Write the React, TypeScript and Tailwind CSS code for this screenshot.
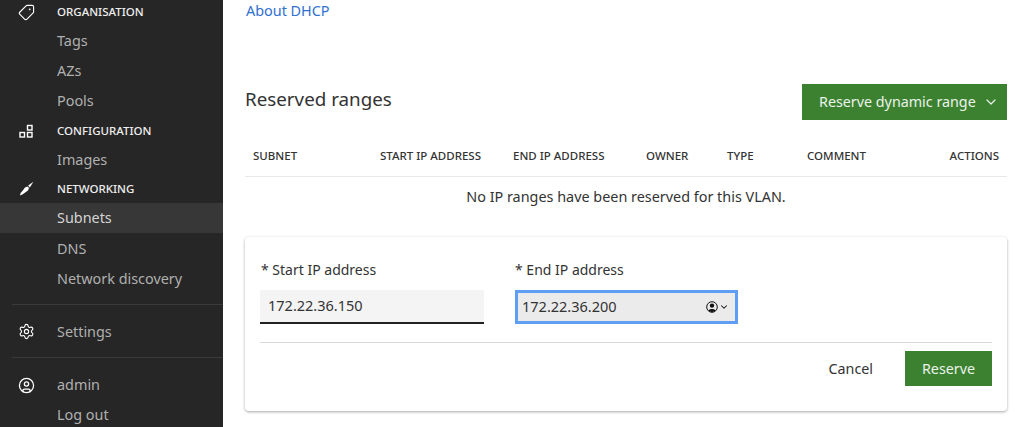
import type { ReactNode } from "react";
import { ChevronDown, Settings, CircleUser, Tag } from "lucide-react";

const Heading = ({ icon, label, h }: { icon: ReactNode; label: string; h: string }) => (
  <div className={`flex items-center shrink-0 ${h}`}>
    <div className="w-[57px] pl-[18px] flex items-center text-white">{icon}</div>
    <span className="text-[11.5px] font-medium text-[#eeeeee]">{label}</span>
  </div>
);

const Item = ({ label, h, active }: { label: string; h: string; active?: boolean }) => (
  <div className={`pl-[57px] shrink-0 flex items-center text-[14.4px] ${h} ${active ? "bg-[#373737] text-[#d4d4d4]" : "text-[#b0b0b0]"}`}>{label}</div>
);

const columns = [
  { label: "SUBNET", w: "w-[135px]", cls: "pl-2" },
  { label: "START IP ADDRESS", w: "w-[133px]", cls: "" },
  { label: "END IP ADDRESS", w: "w-[133px]", cls: "" },
  { label: "OWNER", w: "w-[81px]", cls: "" },
  { label: "TYPE", w: "w-[80px]", cls: "" },
  { label: "COMMENT", w: "w-[110px]", cls: "" },
  { label: "ACTIONS", w: "flex-1", cls: "text-right pr-2" },
];

export default function App() {
  return (
    <div className="flex h-[427px] w-[1024px] overflow-hidden bg-white text-[#333] font-['Noto_Sans',sans-serif]">
      <aside className="w-[223px] shrink-0 bg-[#262626] flex flex-col overflow-hidden">
        <Heading
          h="h-[28px] -mt-[2px]"
          label="ORGANISATION"
          icon={<Tag className="w-[17px] h-[17px] -scale-x-100" strokeWidth={1.6} />}
        />
        <Item label="Tags" h="h-[30px]" />
        <Item label="AZs" h="h-[30px]" />
        <Item label="Pools" h="h-[30px]" />
        <Heading
          h="h-[30px]"
          label="CONFIGURATION"
          icon={
            <svg width="17" height="17" viewBox="0 0 17 17" fill="none" stroke="currentColor" strokeWidth="1.4">
              <rect x="2" y="9.5" width="4.5" height="4.5" />
              <rect x="9.5" y="9.5" width="4.5" height="4.5" />
              <rect x="9.5" y="2.5" width="4.5" height="4.5" />
            </svg>
          }
        />
        <Item label="Images" h="h-[28px]" />
        <Heading
          h="h-[29px]"
          label="NETWORKING"
          icon={
            <svg width="17" height="17" viewBox="0 0 17 17" fill="currentColor">
              <path d="M2 15.5 L2.6 13 L5 10.2 L7 7.6 L9.6 6.4 L11 8 L10 10.4 L7.2 12.4 L4.4 14.6 Z" />
              <path d="M10.2 5.6 L15.4 1.8 L11.8 7.4 Z" />
            </svg>
          }
        />
        <Item label="Subnets" h="h-[30px]" active />
        <Item label="DNS" h="h-[31px]" />
        <Item label="Network discovery" h="h-[30px]" />
        <div className="h-[11px] shrink-0 border-b border-[#3a3a3a] ml-3" />
        <div className="h-[52px] pt-[1px] shrink-0 flex items-center text-[14.4px] text-[#b0b0b0]">
          <div className="w-[57px] pl-[18px] text-white">
            <Settings className="w-[17px] h-[17px]" strokeWidth={1.6} />
          </div>
          Settings
        </div>
        <div className="shrink-0 border-b border-[#3a3a3a] ml-3" />
        <div className="mt-[12px] h-[30px] shrink-0 flex items-center text-[14.4px] text-[#b0b0b0]">
          <div className="w-[57px] pl-[18px] text-white">
            <CircleUser className="w-[17px] h-[17px]" strokeWidth={1.8} />
          </div>
          admin
        </div>
        <Item label="Log out" h="h-[30px]" />
      </aside>

      <main className="flex-1 flex flex-col pl-[22px] pr-[17px]">
        <a className="text-[14.4px] text-[#3070d0] h-[21px] flex items-center pl-px">About DHCP</a>

        <div className="mt-[63px] h-[36px] flex items-center justify-between">
          <h2 className="text-[18.8px] text-[#333] pb-[5px]">Reserved ranges</h2>
          <button className="w-[205px] h-[36px] bg-[#3b8130] text-white/90 text-[14.3px] flex items-center pl-[17px] gap-[7px]">
            Reserve dynamic range
            <ChevronDown className="w-[16px] h-[16px]" strokeWidth={1.8} />
          </button>
        </div>

        <div className="mt-[20px] h-[37px] pb-[4px] flex items-center border-b border-[#e8e8e8] text-[11.5px] font-medium text-[#333]">
          {columns.map((c) => (
            <div key={c.label} className={`${c.w} ${c.cls}`}>{c.label}</div>
          ))}
        </div>
        <div className="h-[40px] flex items-center justify-center text-[14.4px]">No IP ranges have been reserved for this VLAN.</div>

        <div className="mt-[20px] h-[174px] rounded-sm bg-white shadow-[0_1px_3px_rgba(0,0,0,0.35)] px-[15px] pt-[23px]">
          <div className="flex gap-[31px]">
            <div className="w-[224px]">
              <label className="block text-[14px] h-[20px] leading-[20px] pl-px">* Start IP address</label>
              <div className="mt-[10px] h-[34px] bg-[#f4f4f4] border-b-2 border-[#222] flex items-center pl-2 text-[14.5px]">172.22.36.150</div>
            </div>
            <div className="w-[223px]">
              <label className="block text-[14px] h-[20px] leading-[20px]">* End IP address</label>
              <div className="mt-[10px] h-[34px] bg-[#ebebeb] border-[3px] border-[#5e9ff5] flex items-center justify-between pl-[4px] pr-[6px] text-[14.5px]">
                172.22.36.200
                <span className="flex items-center gap-px text-[#111]">
                  <svg width="12" height="12" viewBox="0 0 12 12">
                    <circle cx="6" cy="6" r="5.3" fill="none" stroke="currentColor" strokeWidth="1" />
                    <circle cx="6" cy="4.6" r="2.2" fill="currentColor" />
                    <path d="M2.4 9.6 C3.4 7.6 8.6 7.6 9.6 9.6 C8 11.4 4 11.4 2.4 9.6 Z" fill="currentColor" />
                  </svg>
                  <ChevronDown className="w-[10px] h-[10px]" strokeWidth={2.5} />
                </span>
              </div>
            </div>
          </div>
          <div className="mt-[18px] border-b border-[#d9d9d9]" />
          <div className="mt-[8px] flex items-center justify-end">
            <span className="text-[14.3px] mr-[32px]">Cancel</span>
            <button className="w-[87px] h-[35px] bg-[#3b8130] text-white/90 text-[14.3px]">Reserve</button>
          </div>
        </div>
      </main>
    </div>
  );
}
